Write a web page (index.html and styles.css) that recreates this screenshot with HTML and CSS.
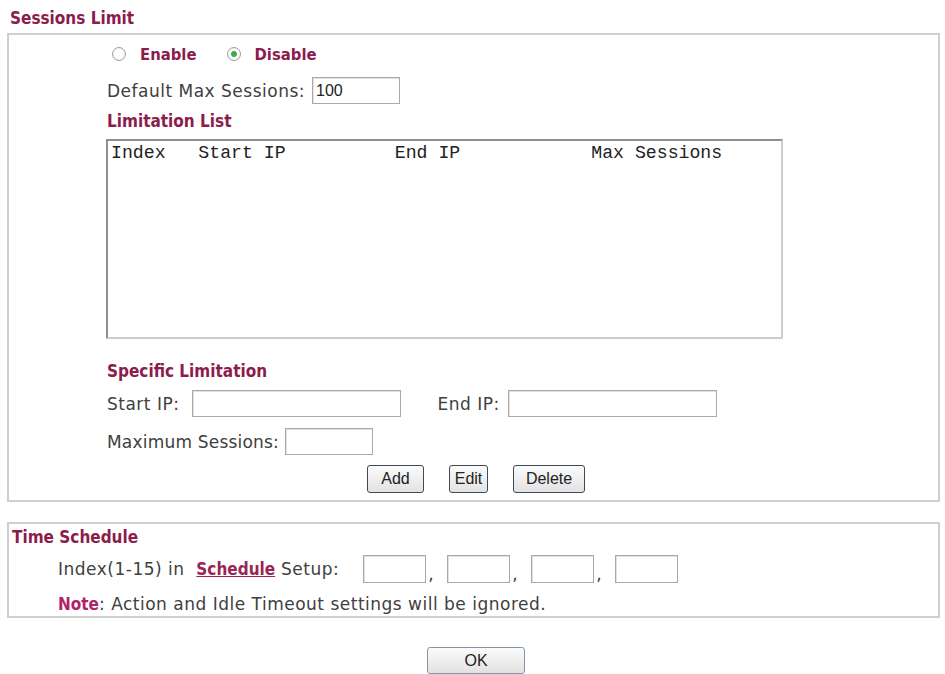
FILE: index.html
```html
<!DOCTYPE html>
<html lang="en">
<head>
    <meta charset="UTF-8">
    <title>Sessions Limit</title>
    <link rel="stylesheet" href="styles.css">
</head>
<body>
    <div class="titre-section titre-haut">Sessions Limit</div>

    <!-- Sessions limit -->
    <div class="panneau">
        <div class="panneau-corps">
            <div class="ligne-radio">
                <input type="radio" name="limite" id="activer">
                <label for="activer" class="label-radio">Enable</label>
                <input type="radio" name="limite" id="desactiver" checked>
                <label for="desactiver" class="label-radio">Disable</label>
            </div>
            <div class="ligne-champ ligne-defaut">
                <label for="maxDefaut">Default Max Sessions:</label>
                <input type="text" id="maxDefaut" class="champ champ-court" value="100">
            </div>
            <div class="titre-section titre-liste">Limitation List</div>
            <div class="liste-limites">Index   Start IP          End IP            Max Sessions</div>
            <div class="titre-section titre-specifique">Specific Limitation</div>
            <div class="ligne-champ ligne-ip">
                <label for="ipDebut">Start IP:</label>
                <input type="text" id="ipDebut" class="champ champ-ip">
                <label for="ipFin" class="label-fin">End IP:</label>
                <input type="text" id="ipFin" class="champ champ-ip">
            </div>
            <div class="ligne-champ ligne-max">
                <label for="maxSessions">Maximum Sessions:</label>
                <input type="text" id="maxSessions" class="champ champ-court">
            </div>
        </div>
        <div class="rangee-boutons">
            <button class="bouton bouton-add">Add</button>
            <button class="bouton bouton-edit">Edit</button>
            <button class="bouton bouton-delete">Delete</button>
        </div>
    </div>

    <!-- Time schedule -->
    <div class="panneau panneau-horaire">
        <div class="titre-section">Time Schedule</div>
        <div class="ligne-horaire">
            <span>Index(1-15) in&nbsp; <a href="#" class="lien-horaire">Schedule</a> Setup:</span>
            <input type="text" class="champ champ-horaire"><span class="virgule">,</span>
            <input type="text" class="champ champ-horaire"><span class="virgule">,</span>
            <input type="text" class="champ champ-horaire"><span class="virgule">,</span>
            <input type="text" class="champ champ-horaire">
        </div>
        <div class="ligne-note"><span class="note">Note</span>: Action and Idle Timeout settings will be ignored.</div>
    </div>

    <div class="rangee-ok">
        <button class="bouton bouton-ok">OK</button>
    </div>
</body>
</html>
```

FILE: styles.css
```css
body {
    margin: 0;
    padding: 9px 5px 0 7px;
    background-color: #ffffff;
    font-family: "DejaVu Sans", Verdana, sans-serif;
    font-size: 17px;
    letter-spacing: 0.5px;
    color: #404040;
}

.titre-section {
    font-family: "DejaVu Sans Condensed", "DejaVu Sans", sans-serif;
    font-stretch: condensed;
    font-weight: bold;
    font-size: 17px;
    letter-spacing: 0;
    line-height: 18px;
    color: #8c1c4c;
}
.titre-haut {
    margin: 0 0 6px 3px;
}

.panneau {
    border: 2px solid #cfcfcf;
}
.panneau-corps {
    padding: 7px 0 0 98px;
}

/* radios */
.ligne-radio {
    display: flex;
    align-items: center;
    height: 24px;
}
.ligne-radio input[type="radio"] {
    appearance: none;
    width: 14px;
    height: 14px;
    margin: 0 14px 0 5px;
    border: 1px solid #a0a0a0;
    border-radius: 50%;
    background: radial-gradient(circle, #ffffff 45%, #e4e4e4 100%);
}
.ligne-radio input[type="radio"]:checked {
    background: radial-gradient(circle, #45a845 0 2.5px, #ffffff 3.5px 50%, #e4e4e4 100%);
}
.label-radio {
    font-family: "DejaVu Sans Condensed", "DejaVu Sans", sans-serif;
    font-stretch: condensed;
    font-weight: bold;
    font-size: 16.5px;
    letter-spacing: 0;
    color: #8c1c4c;
    margin-right: 25px;
}

.ligne-champ {
    display: flex;
    align-items: center;
}
.ligne-champ label {
    margin-right: 7px;
}
.ligne-defaut {
    margin-top: 11px;
}
.champ {
    box-sizing: border-box;
    height: 27px;
    border: 1px solid #a9a9a9;
    box-shadow: inset 1px 1px 0 #e2e2e2;
    padding: 0 3px;
    font-family: "Liberation Sans", Arial, sans-serif;
    font-size: 16px;
    letter-spacing: 0;
    color: #222;
    background: #fff;
}
.champ-court {
    width: 88px;
}
.champ-ip {
    width: 209px;
}
.ligne-ip label {
    margin-right: 13px;
}
.ligne-ip .label-fin {
    margin-left: 36px;
    margin-right: 8px;
}
.ligne-max label {
    letter-spacing: 0.2px;
    margin-right: 6px;
}

.titre-liste {
    margin-top: 7px;
    line-height: 20px;
}
.liste-limites {
    box-sizing: border-box;
    width: 677px;
    height: 200px;
    margin: 8px 0 0 -1px;
    padding: 3px 3px;
    border: 2px solid;
    border-color: #8f8f8f #cdcdcd #cdcdcd #8f8f8f;
    font-family: "Liberation Mono", "Courier New", monospace;
    font-size: 18.2px;
    letter-spacing: 0;
    line-height: 18px;
    white-space: pre;
    color: #222;
}
.titre-specifique {
    margin-top: 22px;
    line-height: 20px;
}
.ligne-ip {
    margin-top: 9px;
}
.ligne-max {
    margin-top: 11px;
}

/* boutons */
.rangee-boutons {
    display: flex;
    justify-content: center;
    gap: 25px;
    padding: 10px 0 7px 5px;
}
.bouton {
    box-sizing: border-box;
    height: 28px;
    padding: 0 9px;
    border: 1px solid #3e4a57;
    border-radius: 3px;
    background: linear-gradient(#fbfbfb, #e2e2e2);
    font-family: "Liberation Sans", Arial, sans-serif;
    font-size: 16px;
    letter-spacing: 0;
    color: #222;
    cursor: pointer;
}
.bouton-add {
    width: 57px;
}
.bouton-edit {
    width: 39px;
    padding: 0;
}
.bouton-delete {
    width: 72px;
}

/* horaire */
.panneau-horaire {
    margin-top: 20px;
    padding: 3px 0 2px 3px;
}
.panneau-horaire .titre-section {
    line-height: 20px;
}
.ligne-horaire {
    display: flex;
    align-items: center;
    margin: 8px 0 0 46px;
}
.ligne-horaire > span:first-child {
    margin-right: 24px;
}
.lien-horaire {
    font-family: "DejaVu Sans Condensed", "DejaVu Sans", sans-serif;
    font-stretch: condensed;
    font-weight: bold;
    letter-spacing: 0;
    color: #9a2456;
}
.champ-horaire {
    width: 63px;
    height: 28px;
}
.virgule {
    width: 19px;
    padding-left: 2px;
    align-self: flex-end;
    line-height: 18px;
}
.ligne-note {
    margin: 11px 0 0 46px;
    line-height: 20px;
}
.note {
    font-family: "DejaVu Sans Condensed", "DejaVu Sans", sans-serif;
    font-stretch: condensed;
    font-weight: bold;
    letter-spacing: 0;
    color: #b0236b;
}

.rangee-ok {
    display: flex;
    justify-content: center;
    padding: 29px 0 0 5px;
}
.bouton-ok {
    width: 98px;
    height: 27px;
    border-color: #8395a8;
    font-size: 16px;
}
```
